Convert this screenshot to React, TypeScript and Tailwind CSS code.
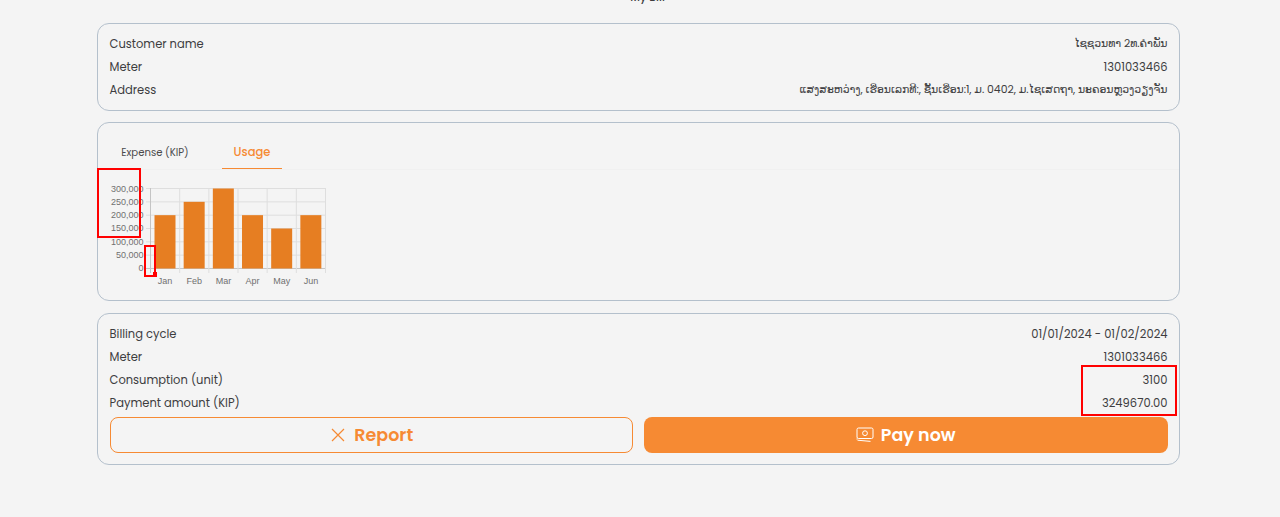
import React from "react";

const poppins = "font-['Poppins','Inter','Noto_Sans','DejaVu_Sans',sans-serif]";

function Row({ label, value, lao }: { label: string; value: string; lao?: boolean }) {
  return (
    <div className="flex h-[23px] items-center justify-between text-[11.5px] text-[#3d3d3f]">
      <span>{label}</span>
      <span className={lao ? "text-[10.9px] tracking-[-0.04px]" : ""}>{value}</span>
    </div>
  );
}

function Chart() {
  const labels = ["300,000", "250,000", "200,000", "150,000", "100,000", "50,000", "0"];
  const months = ["Jan", "Feb", "Mar", "Apr", "May", "Jun"];
  const vals = [200, 250, 300, 200, 150, 200];
  const x0 = 150.5, step = 29.17, y0 = 188.5, rowH = 13.33;
  return (
    <svg width="240" height="125" viewBox="98 170 240 125" className="block" style={{ fontFamily: "'Liberation Sans', sans-serif" }}>
      {labels.map((l, i) => (
        <g key={l}>
          <line x1={146} x2={325.5} y1={y0 + i * rowH} y2={y0 + i * rowH} stroke={i === 6 ? "#c4c4c4" : "#dedede"} />
          <text x={143.5} y={y0 + i * rowH + 3} textAnchor="end" fontSize="9" fill="#707070">{l}</text>
        </g>
      ))}
      {Array.from({ length: 7 }).map((_, i) => (
        <line key={i} x1={x0 + i * step} x2={x0 + i * step} y1={188} y2={273} stroke={i === 0 ? "#c4c4c4" : "#dedede"} />
      ))}
      {vals.map((v, i) => {
        const h = (v / 300) * 80;
        return <rect key={i} x={x0 + i * step + 4} y={268.5 - h} width={21} height={h} fill="#e67e22" />;
      })}
      {months.map((m, i) => (
        <text key={m} x={x0 + i * step + 14.6} y={284} textAnchor="middle" fontSize="9" fill="#707070">{m}</text>
      ))}
    </svg>
  );
}

export default function App() {
  return (
    <div className={`relative h-[517px] w-full overflow-hidden bg-[#f4f4f4] ${poppins}`}>
      <div className="absolute left-[15px] right-0 top-[-11px] text-center text-[11px] font-medium text-[#3d3d3f]">My Bill</div>
      <div className="ml-[97px] flex w-[1083px] flex-col pt-[23px]">
        <section className="h-[88px] rounded-[12px] border border-[#b4c0cc] pl-[11.5px] pr-[11.5px] pt-[9px]">
          <Row label="Customer name" value="ໄຊຊວນທາ 2ທ.ຄຳພັນ" lao />
          <Row label="Meter" value="1301033466" />
          <Row label="Address" value="ແສງສະຫວ່າງ, ເຮືອນເລກທີ:, ຊັ້ນເຮືອນ:1, ມ. 0402, ມ.ໄຊເສດຖາ, ນະຄອນຫຼວງວຽງຈັນ" lao />
        </section>

        <section className="relative mt-[11px] h-[179px] rounded-[12px] border border-[#b4c0cc]">
          <div className="flex h-[47px] items-stretch border-b border-[#f0f0f0] pl-[12px] pt-[14px]">
            <div className="flex w-[90px] items-center justify-center text-[10.1px] text-[#4a4a4c]">Expense (KIP)</div>
            <div className="ml-[22px] flex w-[60px] items-center justify-center border-b border-[#f68a33] text-[11.5px] font-medium text-[#f68a33]">Usage</div>
          </div>
          <Chart />
          <div className="absolute left-[-1px] top-[45px] h-[70px] w-[44px] border-2 border-[#ff0000]" />
          <div className="absolute left-[46px] top-[122px] h-[32px] w-[12px] border-2 border-[#ff0000]" />
          <div className="absolute left-[55px] top-[149px] h-[5px] w-[4px] bg-[#ff0000]" />
        </section>

        <section className="relative mt-[12px] h-[152px] rounded-[12px] border border-[#b4c0cc] pl-[11.5px] pr-[11.5px] pt-[9px]">
          <Row label="Billing cycle" value="01/01/2024 - 01/02/2024" />
          <Row label="Meter" value="1301033466" />
          <Row label="Consumption (unit)" value="3100" />
          <Row label="Payment amount (KIP)" value="3249670.00" />
          <div className="mt-[2px] grid grid-cols-2 gap-[11px]">
            <button className="flex h-[36px] items-center justify-center gap-[9px] rounded-[8px] border border-[#f68a33] pl-[2px] text-[17.5px] font-semibold text-[#f68a33]">
              <svg width="14" height="14" viewBox="0 0 14 14" fill="none" stroke="#f68a33" strokeWidth="1.2"><path d="M1 1l12 12M13 1L1 13" /></svg>
              Report
            </button>
            <button className="flex h-[36px] items-center justify-center gap-[7px] rounded-[8px] bg-[#f68a33] text-[17.5px] font-semibold text-white">
              <svg width="18" height="16" viewBox="0 0 18 16" fill="none" stroke="white" strokeWidth="1"><rect x="1" y="1" width="16" height="10.5" rx="1.5" /><circle cx="9" cy="6.2" r="2.4" /><path d="M1.5 13.2l13 1.2M1 11.5v1" /></svg>
              Pay now
            </button>
          </div>
          <div className="absolute right-[2px] top-[51px] h-[51px] w-[96px] border-2 border-[#ff0000]" />
        </section>
      </div>
    </div>
  );
}
